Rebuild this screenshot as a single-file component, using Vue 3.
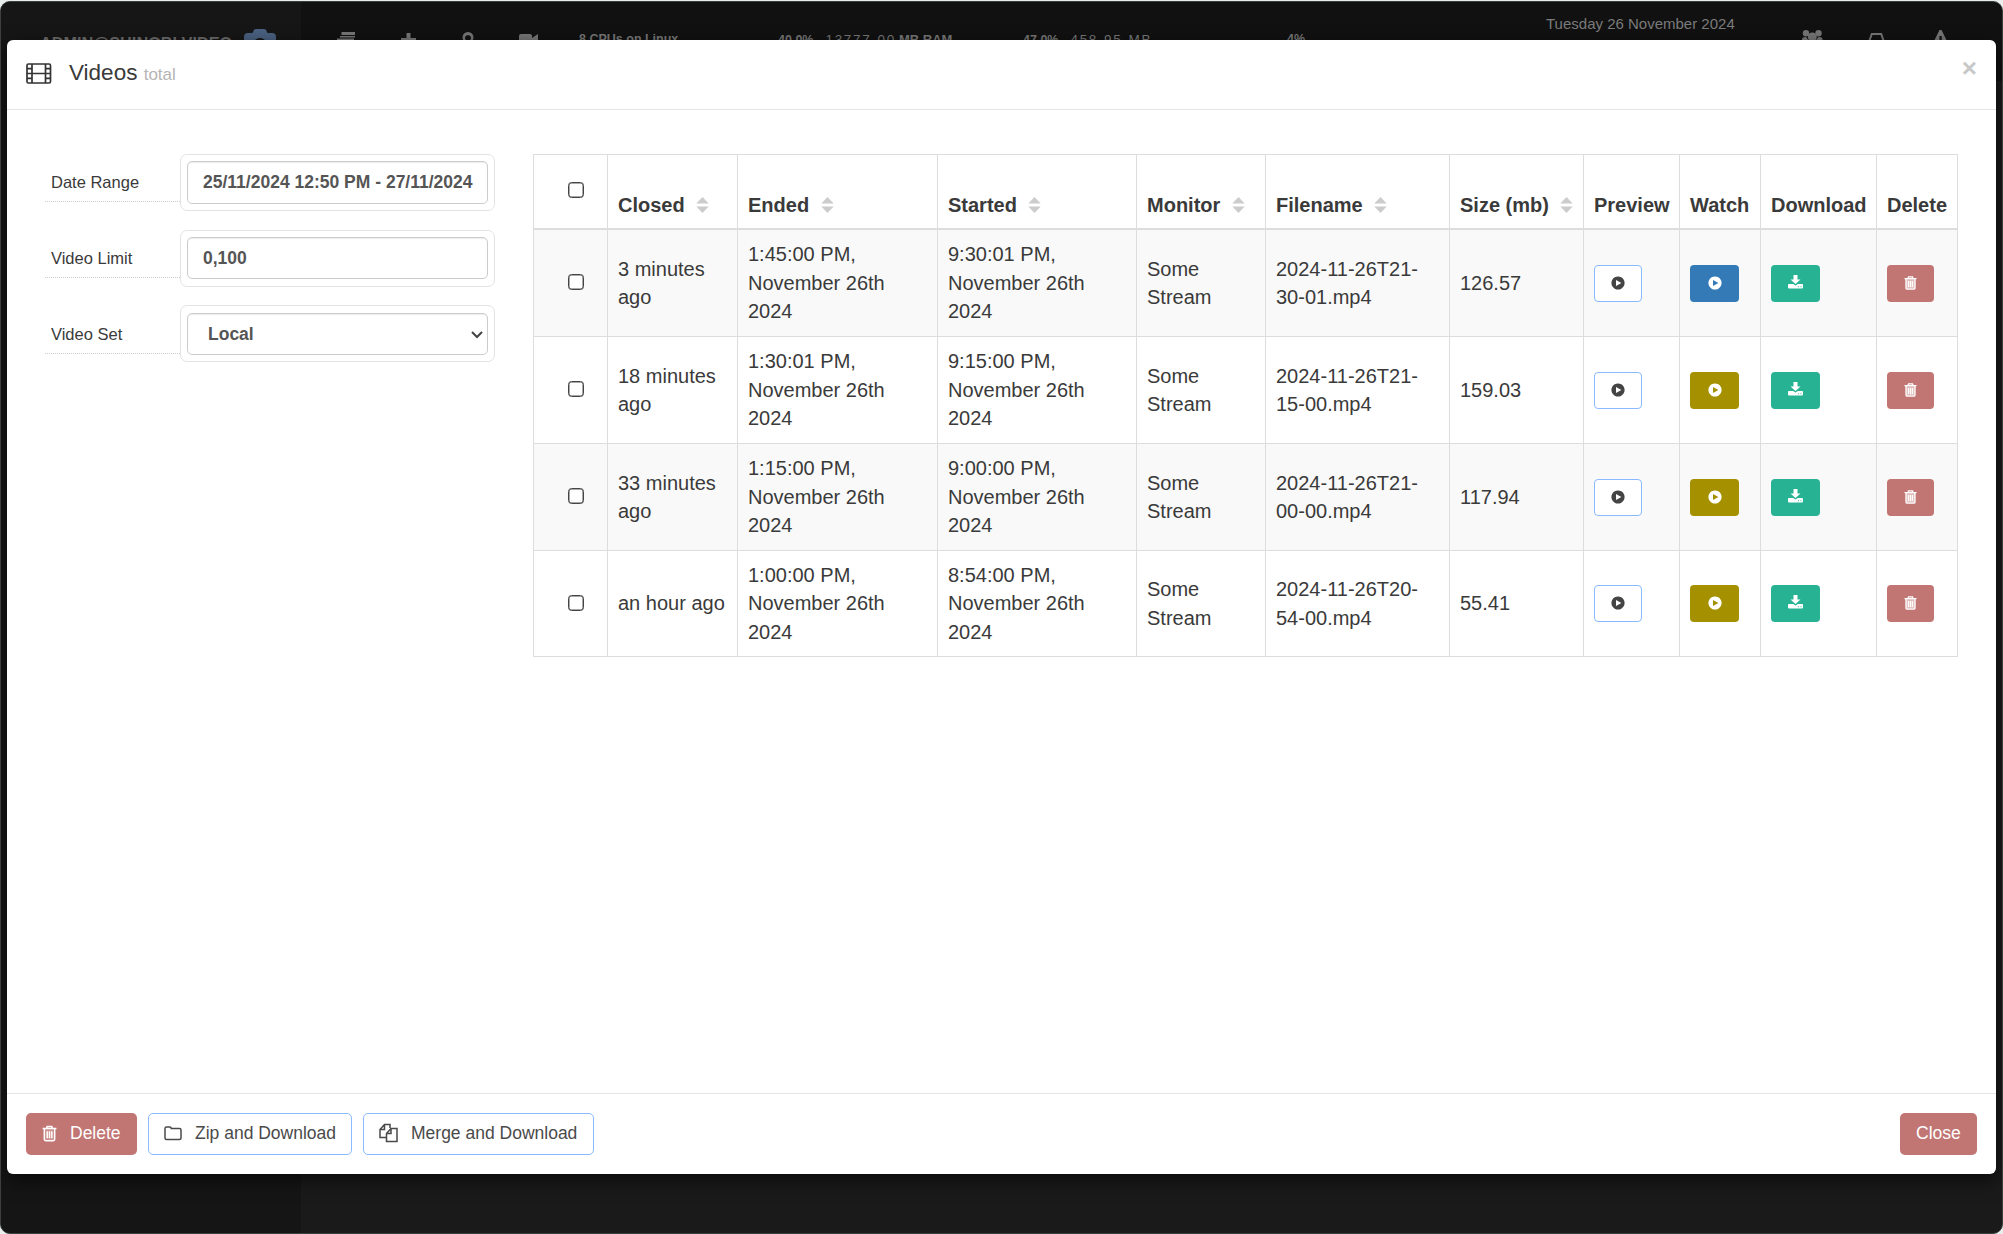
<template>
  <div class="window">
    <div class="topbar">
      <div class="brand">
        <span class="brand-name">ADMIN@SHINOBI.VIDEO</span>
        <svg class="camera" viewBox="0 0 32 26">
          <path
            fill-rule="evenodd"
            d="M8.500 4 10 1q.6-1 2-1h8q1.400 0 2 1l1.500 3H28q4 0 4 4v14q0 4-4 4H4q-4 0-4-4V8q0-4 4-4zM16 9a7 7 0 1 0 .01 0z"
          />
        </svg>
      </div>
      <div class="tools">
        <svg class="tool t32" width="19" height="17" viewBox="0 0 19 17">
          <path d="M4.500 0H18v3H4.500zM3 4h15v1.500H3zM0 6.500h17v3H0zM3 11h15v3H3z" />
        </svg>
        <svg class="tool t32" width="15" height="16" viewBox="0 0 15 16">
          <path d="M5.500 1h4v5H15v4H9.500v6h-4v-6H0V6h5.500z" />
        </svg>
        <svg class="tool t32" width="12" height="17" viewBox="0 0 12 17">
          <path
            fill-rule="evenodd"
            d="M6 0a5.500 5.500 0 0 1 5.500 5.500C11.500 9 6 17 6 17S.5 9 .5 5.500A5.500 5.500 0 0 1 6 0zm0 3a3 3 0 1 0 .01 0z"
          />
        </svg>
        <svg class="tool t34" width="20" height="14" viewBox="0 0 20 14">
          <path d="M2 0h9q2 0 2 2v2l6-4v14l-6-4v2q0 2-2 2H2q-2 0-2-2V2q0-2 2-2z" />
        </svg>
        <span class="stat">8 CPUs on Linux</span>
        <span class="stat"
          >40.0%<span class="digits">13777<i>.</i>00</span><b>MB RAM</b></span
        >
        <span class="stat"
          >47.0%<span class="digits">458<i>.</i>95<i></i>MB</span></span
        >
        <span class="stat">4%</span>
        <span class="today">Tuesday 26 November 2024</span>
        <svg class="tool t30" width="21" height="16" viewBox="0 0 21 16">
          <circle cx="4" cy="3.300" r="3.200" />
          <circle cx="16.500" cy="3.300" r="3.200" />
          <circle cx="10.300" cy="7" r="4.500" />
          <path d="M0 13V8.500Q1 6.500 4 7l4 5v3H1zM20.500 13V8.500q-1-2-4-1.500l-4 5v3h6z" />
        </svg>
        <svg class="tool line t33" width="18" height="14" viewBox="0 0 18 14">
          <path d="M1 9 3.800 1h9.400L16 9v4H1z" />
        </svg>
        <svg class="tool t30" width="14" height="18" viewBox="0 0 14 18">
          <path
            fill-rule="evenodd"
            d="M5.500 0h2L13 11v4H0v-4zm0 6v6h2.200V6z"
          />
        </svg>
      </div>
    </div>
    <div class="page">
      <div class="side"></div>
    </div>

    <div class="modal">
      <div class="modal-header">
        <svg class="film" width="26" height="22" viewBox="0 0 26 22">
          <rect x="1" y="1" width="23.500" height="19" rx="1.500" />
          <path
            d="M6 1v19M19.500 1v19M6 10.500h13.500M1 5.700h5M1 10.500h5M1 15.300h5M19.500 5.700h5M19.500 10.500h5M19.500 15.300h5"
          />
        </svg>
        <h4 class="modal-title">Videos <small>total</small></h4>
        <span class="dismiss">&times;</span>
      </div>

      <div class="modal-body">
        <div class="filters">
          <div class="field">
            <label>Date Range</label>
            <div class="control">
              <div class="input">25/11/2024 12:50 PM - 27/11/2024</div>
            </div>
          </div>
          <div class="field">
            <label>Video Limit</label>
            <div class="control">
              <div class="input short">0,100</div>
            </div>
          </div>
          <div class="field last">
            <label>Video Set</label>
            <div class="control">
              <div class="input short select">
                Local
                <svg width="12" height="8" viewBox="0 0 12 8">
                  <path d="M1 1l5 5 5-5" />
                </svg>
              </div>
            </div>
          </div>
        </div>

        <table class="videos">
          <colgroup>
            <col v-for="(width, i) in widths" :key="i" :style="{ width: width + 'px' }" />
          </colgroup>
          <thead>
            <tr>
              <th class="check head-check"><span class="box"></span></th>
              <th v-for="col in columns" :key="col.label">
                {{ col.label
                }}<svg v-if="col.sortable" class="sort" width="13" height="16" viewBox="0 0 13 16">
                  <path d="M0.300 6.500 6.500 0l6.200 6.500zM0.300 9.500h12.400L6.500 16z" />
                </svg>
              </th>
            </tr>
          </thead>
          <tbody>
            <tr v-for="video in videos" :key="video.filename">
              <td class="check"><span class="box"></span></td>
              <td>{{ video.closed }}</td>
              <td>{{ video.ended }}, November 26th 2024</td>
              <td>{{ video.started }}, November 26th 2024</td>
              <td>Some Stream</td>
              <td>{{ video.filename }}</td>
              <td>{{ video.size }}</td>
              <td>
                <span class="action preview">
                  <svg width="14" height="14" viewBox="0 0 14 14">
                    <path fill-rule="evenodd" :d="playIcon" />
                  </svg>
                </span>
              </td>
              <td>
                <span class="action" :class="video.watched ? 'watched' : 'unwatched'">
                  <svg width="14" height="14" viewBox="0 0 14 14">
                    <path fill-rule="evenodd" :d="playIcon" />
                  </svg>
                </span>
              </td>
              <td>
                <span class="action download">
                  <svg width="15" height="14" viewBox="0 0 15 14">
                    <path
                      fill-rule="evenodd"
                      d="M5.500 0h4v4.500h3L7.500 9 2.500 4.500h3zM.8 9h4.400l2.300 1.500L9.800 9h4.400q.8 0 .8.8v2.800q0 .8-.8.8H.8q-.8 0-.8-.8V9.800Q0 9 .8 9zM10 11.300v.9h.9v-.9zM12.500 11.300v.9h.9v-.9z"
                    />
                  </svg>
                </span>
              </td>
              <td>
                <span class="action delete">
                  <svg class="trash" width="13" height="14" viewBox="0 0 13 14">
                    <path class="can" d="M2 3h9v10H2z" />
                    <path :d="trashIcon" />
                  </svg>
                </span>
              </td>
            </tr>
          </tbody>
        </table>
      </div>

      <div class="modal-footer">
        <span class="btn danger">
          <svg class="trash" width="15" height="17" viewBox="0 0 13 14">
            <path class="can light" d="M2 3h9v10H2z" />
            <path :d="trashIcon" />
          </svg>
          Delete
        </span>
        <span class="btn outline zip">
          <svg width="18" height="15" viewBox="0 0 18 15">
            <path
              d="M1 2.500Q1 1 2.500 1h3.300q1.400 0 1.400 1.500h8.300q1.500 0 1.500 1.500v8q0 1.500-1.500 1.500h-13Q1 13.500 1 12z"
            />
          </svg>
          Zip and Download
        </span>
        <span class="btn outline merge">
          <svg width="19" height="20" viewBox="0 0 19 20">
            <path
              d="M7.500 14.500H1v-8l4.500-5H11V5M5.500 1.500v5H1M7.500 18.500v-8l4.500-5h6v13zM12 5.500v5H7.500"
            />
          </svg>
          Merge and Download
        </span>
        <span class="btn danger close">Close</span>
      </div>
    </div>
  </div>
</template>

<script setup>
import { ref } from "vue";

const widths = [74, 130, 200, 199, 129, 184, 134, 96, 81, 116, 81];

const columns = [
  { label: "Closed", sortable: true },
  { label: "Ended", sortable: true },
  { label: "Started", sortable: true },
  { label: "Monitor", sortable: true },
  { label: "Filename", sortable: true },
  { label: "Size (mb)", sortable: true },
  { label: "Preview" },
  { label: "Watch" },
  { label: "Download" },
  { label: "Delete" },
];

const videos = ref([
  {
    closed: "3 minutes ago",
    ended: "1:45:00 PM",
    started: "9:30:01 PM",
    filename: "2024-11-26T21-30-01.mp4",
    size: "126.57",
    watched: true,
  },
  {
    closed: "18 minutes ago",
    ended: "1:30:01 PM",
    started: "9:15:00 PM",
    filename: "2024-11-26T21-15-00.mp4",
    size: "159.03",
  },
  {
    closed: "33 minutes ago",
    ended: "1:15:00 PM",
    started: "9:00:00 PM",
    filename: "2024-11-26T21-00-00.mp4",
    size: "117.94",
  },
  {
    closed: "an hour ago",
    ended: "1:00:00 PM",
    started: "8:54:00 PM",
    filename: "2024-11-26T20-54-00.mp4",
    size: "55.41",
  },
]);

const playIcon =
  "M7 .4a6.600 6.600 0 1 0 .01 0zM5 3.900v6.200l5.400-3.100z";
const trashIcon =
  "M.5 2.700h12M4 2.500l.5-1.600h4L9 2.500M2 3v9q0 1.200 1.200 1.200h6.600Q11 13.200 11 12V3M4.500 5v6.200M6.500 5v6.200M8.500 5v6.200";
</script>

<style>
body {
  margin: 0;
  background: #e9eeec;
}
</style>

<style scoped>
.window {
  position: relative;
  box-sizing: border-box;
  width: 2003px;
  height: 1233px;
  margin-top: 1px;
  border: 1px solid #3c4040;
  border-radius: 10px;
  overflow: hidden;
  background: #1a1a1a;
  font-family: "Liberation Sans", Arial, sans-serif;
  color: #3a3a3a;
  display: flex;
  flex-direction: column;
}

/* background page */
.topbar {
  display: flex;
  height: 79px;
  background: #111;
}

.brand {
  box-sizing: border-box;
  width: 300px;
  padding-left: 39px;
  display: flex;
  background: #161616;
}

.brand-name {
  width: 204px;
  margin-top: 32px;
  font-size: 16.300px;
  font-weight: bold;
  color: #6b6b6b;
  white-space: nowrap;
}

.camera {
  width: 32px;
  height: 26px;
  margin-top: 27px;
  fill: #4a6181;
}

.tools {
  display: grid;
  grid-template-columns: 64px 61px 57px 60px 199px 245px 264px 259px 256px 66px 66px 40px;
  padding-left: 36px;
  align-items: start;
}

.tool {
  fill: #777;
}

.tool.line {
  fill: none;
  stroke: #777;
  stroke-width: 2;
}

.t30 {
  margin-top: 28px;
}

.t32 {
  margin-top: 30px;
}

.t33 {
  margin-top: 31px;
}

.t34 {
  margin-top: 32px;
}

.stat {
  margin-top: 30px;
  font-size: 12.500px;
  font-weight: bold;
  line-height: 15px;
  color: #777;
  white-space: nowrap;
}

.stat b {
  font-size: 13px;
}

.digits {
  margin: 0 3px 0 12px;
  font-size: 13.500px;
  font-weight: normal;
  letter-spacing: 1.700px;
}

.digits i {
  display: inline-block;
  width: 6px;
}

.today {
  margin-top: 13px;
  font-size: 15px;
  line-height: 18px;
  color: #7b7b7b;
  white-space: nowrap;
}

.page {
  flex: 1;
  display: flex;
}

.side {
  width: 300px;
  background: #151515;
}

/* dialog */
.modal {
  position: absolute;
  left: 6px;
  top: 38px;
  width: 1989px;
  height: 1134px;
  border-radius: 6px;
  background: #fff;
  box-shadow: 0 6px 19px rgba(0, 0, 0, 0.6);
  display: flex;
  flex-direction: column;
}

.modal-header {
  box-sizing: border-box;
  height: 70px;
  padding: 0 19px 0 19px;
  border-bottom: 1px solid #e5e5e5;
  display: flex;
}

.film {
  margin-top: 23px;
  fill: none;
  stroke: #333;
  stroke-width: 1.700;
}

.modal-title {
  margin: 19px 0 0 17px;
  font-size: 22.500px;
  font-weight: normal;
  line-height: 28px;
}

.modal-title small {
  font-size: 17px;
  color: #b5b5b5;
}

.dismiss {
  margin-left: auto;
  margin-top: 14px;
  font-size: 26px;
  font-weight: bold;
  line-height: 28px;
  color: #c8c8c8;
}

.modal-body {
  flex: 1;
  padding: 44px 38px 0;
  display: flex;
  justify-content: space-between;
  align-items: flex-start;
}

.filters {
  width: 450px;
}

.field {
  display: flex;
  height: 57px;
  margin-bottom: 19px;
}

.field.last {
  margin-top: -1px;
}

.field label {
  box-sizing: border-box;
  width: 135px;
  height: 48px;
  padding: 19px 0 0 6px;
  border-bottom: 1px dotted #ccc;
  font-size: 16.500px;
  line-height: 19px;
}

.field.last label {
  height: 49px;
  padding-top: 20px;
}

.control {
  box-sizing: border-box;
  width: 315px;
  height: 57px;
  padding: 6px;
  border: 1px solid #e3e3e3;
  border-radius: 7px;
}

.last .control {
  padding-top: 7px;
}

.input {
  box-sizing: border-box;
  height: 43px;
  padding: 0 15px;
  border: 1px solid #ccc;
  border-radius: 5px;
  box-shadow: inset 0 1px 1px rgba(0, 0, 0, 0.075);
  font-size: 17.500px;
  font-weight: bold;
  line-height: 40px;
  color: #555;
  white-space: nowrap;
  overflow: hidden;
}

.short {
  height: 42px;
}

.select {
  display: flex;
  justify-content: space-between;
  align-items: center;
  padding: 0 4px 0 20px;
}

.select svg {
  margin-top: 1px;
  fill: none;
  stroke: #444;
  stroke-width: 2;
}

.videos {
  width: 1425px;
  table-layout: fixed;
  border-collapse: separate;
  border-spacing: 0;
  border: solid #ddd;
  border-width: 1px 0 0 1px;
  font-size: 20px;
  line-height: 28.500px;
}

.videos th,
.videos td {
  box-sizing: border-box;
  padding: 0 8px 0 10px;
  border: solid #ddd;
  border-width: 0 1px 1px 0;
  text-align: left;
  vertical-align: middle;
}

.videos th {
  height: 75px;
  padding-bottom: 9px;
  border-bottom-width: 2px;
  vertical-align: bottom;
  white-space: nowrap;
}

.videos td {
  height: 107px;
}

.videos tr:last-child td {
  height: 106px;
}

.videos tbody tr:nth-child(odd) {
  background: #f9f9f9;
}

.videos .check {
  padding-left: 34px;
  padding-bottom: 2px;
  line-height: 0;
}

.videos .head-check {
  padding-bottom: 30px;
}

.box {
  box-sizing: border-box;
  display: inline-block;
  width: 16px;
  height: 16px;
  border: 1px solid #444;
  border-radius: 3.500px;
  background: #fff;
  box-shadow: inset 0 0 0 0.500px #555;
}

.sort {
  margin-left: 11.500px;
  vertical-align: -1px;
  fill: #ccc;
}

.action {
  box-sizing: border-box;
  width: 49px;
  height: 37px;
  border-radius: 4px;
  display: flex;
  align-items: center;
  justify-content: center;
  fill: #fff;
}

.action svg {
  margin-bottom: 1px;
}

.preview {
  width: 48px;
  border: 1px solid #8abaff;
  background: #fff;
  fill: #444;
}

.watched {
  background: #337ab7;
}

.unwatched {
  background: #a59100;
}

.download {
  background: #27b293;
}

.download svg {
  margin-bottom: 3px;
}

.delete {
  width: 47px;
  background: #c17674;
}

.trash {
  fill: none;
  stroke: #fff;
  stroke-width: 1.300;
}

.trash .can {
  fill: rgba(255, 255, 255, 0.5);
  stroke: none;
}

.trash .light {
  fill: rgba(255, 255, 255, 0.2);
}

.modal-footer {
  box-sizing: border-box;
  height: 81px;
  padding: 19px 19px 0;
  border-top: 1px solid #e5e5e5;
  display: flex;
  gap: 11px;
}

.btn {
  box-sizing: border-box;
  width: 111px;
  height: 42px;
  padding-left: 16px;
  padding-bottom: 2px;
  border-radius: 5px;
  display: flex;
  align-items: center;
  gap: 13px;
  font-size: 17.500px;
  white-space: nowrap;
}

.danger {
  background: #c17674;
  color: #fff;
}

.outline {
  padding-left: 15px;
  border: 1px solid #8abaff;
  color: #4a4a4a;
}

.outline svg {
  fill: none;
  stroke: #4a4a4a;
  stroke-width: 1.500;
}

.zip {
  width: 204px;
}

.merge {
  width: 231px;
}

.close {
  width: 77px;
  margin-left: auto;
}
</style>
